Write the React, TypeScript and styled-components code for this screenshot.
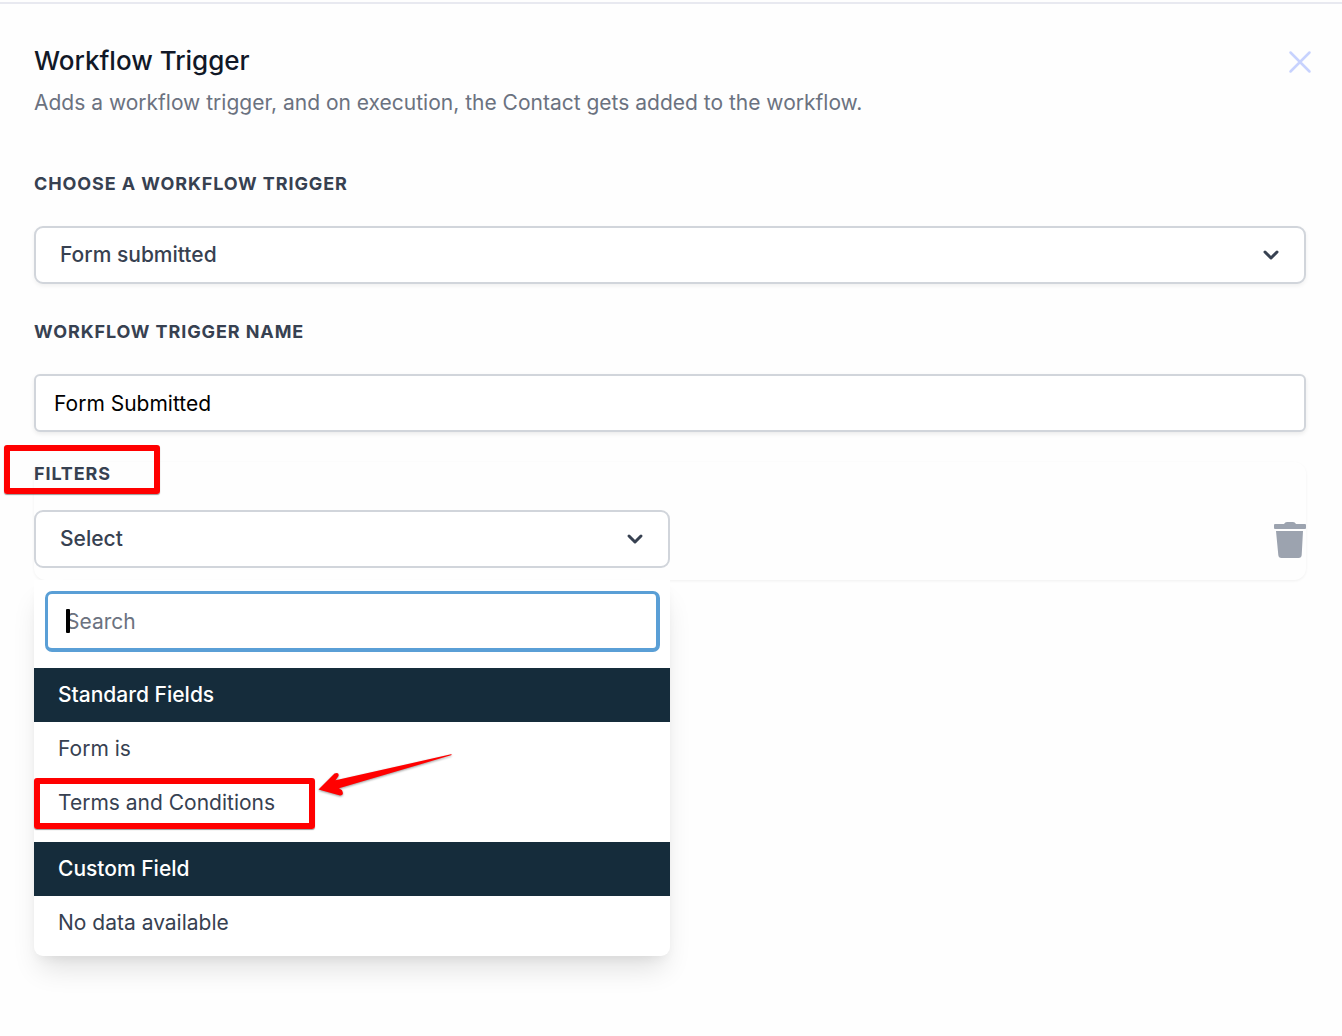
import React, { useState } from "react";
import styled, { createGlobalStyle, css } from "styled-components";

const color = {
  ink: "#111827",
  text: "#374151",
  muted: "#6b7280",
  border: "#d1d5db",
  icon: "#9ca3af",
  focus: "#5a9fd6",
  band: "#152c3b",
  mark: "#ff0000",
};

const GlobalStyle = createGlobalStyle`
  *, *::before, *::after { box-sizing: border-box; }
  body {
    margin: 0;
    background: #fefefe;
    color: ${color.text};
    font-family: Inter, "Liberation Sans", sans-serif;
    font-size: 21px;
    line-height: 30px;
  }
  h1, h2, p, ul { margin: 0; padding: 0; }
  button, input, select { font: inherit; color: inherit; margin: 0; }
`;

const Page = styled.div`
  min-height: 100vh;
  padding-top: 2px;
`;

const Panel = styled.main`
  border-top: 2px solid #e8e9f0;
  padding: 38px 36px 80px 34px;
`;

const Header = styled.header`
  display: flex;
  justify-content: space-between;
  align-items: flex-start;
  margin-bottom: 54px;
`;

const Heading = styled.div`
  display: flex;
  flex-direction: column;
  gap: 8px;
`;

const Title = styled.h1`
  color: ${color.ink};
  font-size: 26px;
  font-weight: 500;
  line-height: 38px;
`;

const Description = styled.p`
  color: ${color.muted};
`;

const IconButton = styled.button`
  display: flex;
  padding: 0;
  border: 0;
  background: none;
  cursor: pointer;
`;

const CloseButton = styled(IconButton)`
  margin-top: 4px;
  margin-right: -10px;
`;

const Field = styled.div`
  display: flex;
  flex-direction: column;
  gap: 30px;
  margin-bottom: 36px;
`;

const labelText = css`
  align-self: flex-start;
  font-size: 18px;
  font-weight: 700;
  line-height: 24px;
  letter-spacing: 0.05em;
  text-transform: uppercase;
`;

const Label = styled.label`
  ${labelText}
`;

const controlBox = css`
  width: 100%;
  height: 58px;
  border: 2px solid ${color.border};
  border-radius: 9px;
  background: #fff;
`;

const SelectWrap = styled.div`
  display: grid;
  align-items: center;
  & > * { grid-area: 1 / 1; }
  & > svg {
    justify-self: end;
    margin-right: 26px;
    pointer-events: none;
  }
`;

const Select = styled.select`
  ${controlBox}
  appearance: none;
  padding: 0 60px 0 24px;
  font-weight: 500;
  box-shadow: 0 2px 4px rgba(0, 0, 0, 0.06);
`;

const TextInput = styled.input`
  ${controlBox}
  border-radius: 6px;
  padding: 0 18px;
  color: #000;
  box-shadow: 0 2px 4px rgba(0, 0, 0, 0.08);
`;

const Filters = styled.section`
  display: flex;
  flex-direction: column;
  gap: 24px;
  margin-top: -6px;
  padding-bottom: 12px;
  border-radius: 12px;
  box-shadow: 0 1px 3px rgba(0, 0, 0, 0.06);
`;

const FiltersTitle = styled.h2`
  ${labelText}
  position: relative;
`;

const Highlight = styled.span<{ $inset: string }>`
  position: absolute;
  inset: ${(p) => p.$inset};
  border: 6px solid ${color.mark};
  border-radius: 3px;
  box-shadow: 0 1px 1px rgba(0, 0, 0, 0.4);
  pointer-events: none;
`;

const FilterRow = styled.div`
  display: flex;
  justify-content: space-between;
  align-items: center;
`;

const Combo = styled.div`
  position: relative;
  width: 50%;
`;

const ComboButton = styled.button`
  ${controlBox}
  display: flex;
  justify-content: space-between;
  align-items: center;
  padding: 0 24px;
  font-weight: 500;
  cursor: pointer;
`;

const Menu = styled.div`
  position: absolute;
  top: calc(100% + 12px);
  left: 0;
  right: 0;
  padding-bottom: 6px;
  border-radius: 0 0 9px 9px;
  background: #fff;
  box-shadow: 0 18px 28px -6px rgba(0, 0, 0, 0.12), 0 6px 12px -4px rgba(0, 0, 0, 0.06);
`;

const SearchBox = styled.div`
  position: relative;
  padding: 11px 10px 16px 11px;
`;

const SearchInput = styled.input`
  display: block;
  width: 100%;
  height: 61px;
  padding: 0 18px;
  border: 3px solid ${color.focus};
  border-bottom-width: 4px;
  border-right-width: 4px;
  border-radius: 7px;
  background: #fff;
  color: ${color.text};
  outline: none;
  &::placeholder { color: ${color.muted}; opacity: 1; }
`;

const Caret = styled.span`
  position: absolute;
  top: 29px;
  left: 32px;
  width: 4px;
  height: 24px;
  border-radius: 1px;
  background: #000;
`;

const GroupTitle = styled.h2`
  padding: 12px 24px;
  background: ${color.band};
  color: #fff;
  font-size: 21px;
  font-weight: 500;
`;

const Options = styled.ul`
  list-style: none;
  & + ${GroupTitle} { margin-top: 12px; }
`;

const Option = styled.li`
  padding: 12px 24px;
`;

const Marked = styled.span`
  position: relative;
  display: inline-block;
`;

const Arrow = styled.svg`
  position: absolute;
  left: 259px;
  top: -36px;
  pointer-events: none;
  overflow: visible;
  filter: drop-shadow(0 1px 1px rgba(0, 0, 0, 0.4));
`;

const Chevron = () => (
  <svg width="18" height="18" viewBox="0 0 18 18" fill="none" stroke={color.text} strokeWidth="3" strokeLinecap="round" strokeLinejoin="round" aria-hidden="true">
    <path d="M3 6l6 6 6-6" />
  </svg>
);

const PointerArrow = () => (
  <Arrow width="136" height="46" viewBox="0 0 136 46" aria-hidden="true">
    <path
      d="M134 2.300Q135.500 2.500 134 3.300L22 36.300L25 38.300Q27.500 43.500 23 43.500L1.500 37.500L17.500 21.500Q22.500 20 21.500 24L18.500 28.300Z"
      fill={color.mark}
    />
  </Arrow>
);

export default function App() {
  const [name, setName] = useState("Form Submitted");
  const [query, setQuery] = useState("");
  const [open, setOpen] = useState(true);

  return (
    <Page>
      <GlobalStyle />
      <Panel>
        <Header>
          <Heading>
            <Title>Workflow Trigger</Title>
            <Description>
              Adds a workflow trigger, and on execution, the Contact gets added to the workflow.
            </Description>
          </Heading>
          <CloseButton type="button" aria-label="Close">
            <svg width="32" height="32" viewBox="0 0 32 32" fill="none" stroke="#c7d2fe" strokeWidth="2.5" strokeLinecap="round" aria-hidden="true">
              <path d="M6.500 6.500l19 19M25.500 6.500l-19 19" />
            </svg>
          </CloseButton>
        </Header>

        <Field>
          <Label htmlFor="trigger">Choose a workflow trigger</Label>
          <SelectWrap>
            <Select id="trigger">
              <option>Form submitted</option>
            </Select>
            <Chevron />
          </SelectWrap>
        </Field>

        <Field>
          <Label htmlFor="trigger-name">Workflow trigger name</Label>
          <TextInput id="trigger-name" value={name} onChange={(e) => setName(e.target.value)} />
        </Field>

        <Filters>
          <FiltersTitle id="filters">
            Filters
            <Highlight $inset="-17px -49px -8px -30px" />
          </FiltersTitle>
          <FilterRow>
            <Combo>
              <ComboButton
                type="button"
                aria-haspopup="listbox"
                aria-expanded={open}
                aria-describedby="filters"
                onClick={() => setOpen(!open)}
              >
                Select
                <Chevron />
              </ComboButton>
              {open && (
                <Menu>
                  <SearchBox>
                    <SearchInput
                      type="text"
                      aria-label="Search"
                      placeholder="Search"
                      value={query}
                      onChange={(e) => setQuery(e.target.value)}
                    />
                    <Caret />
                  </SearchBox>
                  <GroupTitle>Standard Fields</GroupTitle>
                  <Options>
                    <Option>Form is</Option>
                    <Option>
                      <Marked>
                        Terms and Conditions
                        <Highlight $inset="-10px -40px -11px -24px" />
                        <PointerArrow />
                      </Marked>
                    </Option>
                  </Options>
                  <GroupTitle>Custom Field</GroupTitle>
                  <Options>
                    <Option>No data available</Option>
                  </Options>
                </Menu>
              )}
            </Combo>
            <IconButton type="button" aria-label="Delete filter">
              <svg width="32" height="38" viewBox="0 0 32 38" fill={color.icon} aria-hidden="true">
                <path d="M1 4h9q1-2 3-2h6q2 0 3 2h9q1 0 1 1v3q0 1-1 1H1q-1 0-1-1V5q0-1 1-1z" />
                <path d="M2 11h27l-1.300 24q-.2 3-3.200 3h-17q-3 0-3.200-3z" />
              </svg>
            </IconButton>
          </FilterRow>
        </Filters>
      </Panel>
    </Page>
  );
}
